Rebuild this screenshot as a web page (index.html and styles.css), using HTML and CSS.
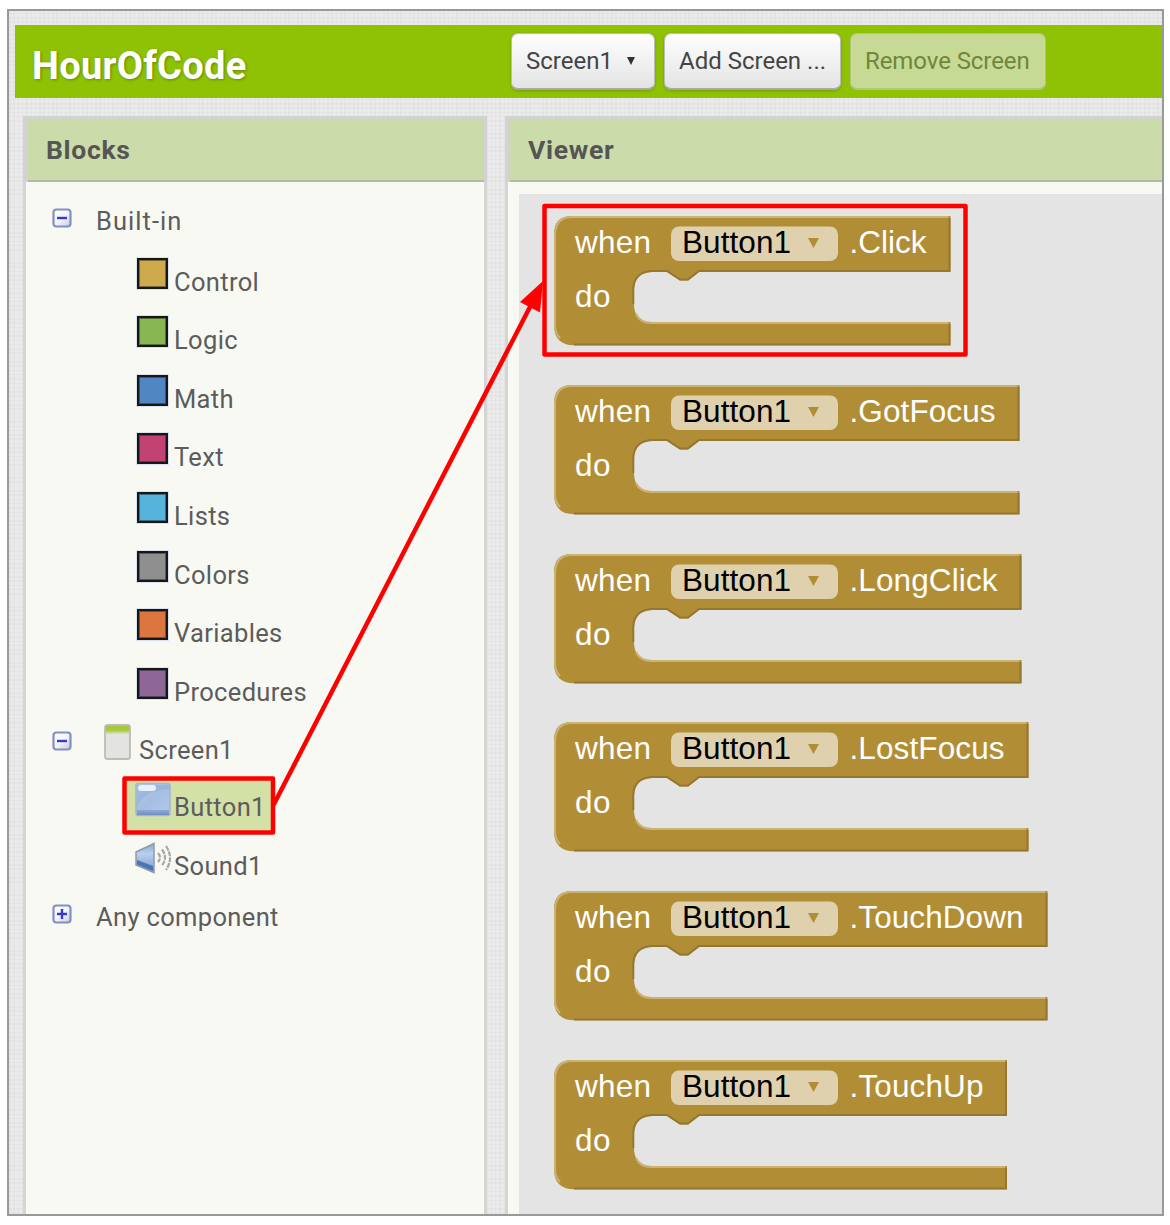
FILE: index.html
```html
<!DOCTYPE html>
<html lang="en">
<head>
<meta charset="utf-8">
<title>HourOfCode</title>
<link rel="stylesheet" href="styles.css">
</head>
<body>
<div class="window">
  <header class="bar">
    <h1 class="title">HourOfCode</h1>
    <nav class="tools">
      <button class="btn w-screen">Screen1<span class="caret"></span></button>
      <button class="btn w-add">Add Screen ...</button>
      <button class="btn w-remove disabled">Remove Screen</button>
    </nav>
  </header>
  <main class="panels">
    <section class="panel blocks">
      <h2 class="head">Blocks</h2>
      <div class="body tree">
        <div class="row root builtin"><svg class="toggle" viewBox="0 0 20 20"><use href="#box"/><path class="sign" d="M5 10H15"/></svg><span class="name">Built-in</span></div>
        <div class="row leaf"><i class="swatch control"></i><span class="name">Control</span></div>
        <div class="row leaf"><i class="swatch logic"></i><span class="name">Logic</span></div>
        <div class="row leaf"><i class="swatch math"></i><span class="name">Math</span></div>
        <div class="row leaf"><i class="swatch text"></i><span class="name">Text</span></div>
        <div class="row leaf"><i class="swatch lists"></i><span class="name">Lists</span></div>
        <div class="row leaf"><i class="swatch colors"></i><span class="name">Colors</span></div>
        <div class="row leaf"><i class="swatch variables"></i><span class="name">Variables</span></div>
        <div class="row leaf"><i class="swatch procedures"></i><span class="name">Procedures</span></div>
        <div class="row screen"><svg class="toggle" viewBox="0 0 20 20"><use href="#box"/><path class="sign" d="M5 10H15"/></svg><svg class="phone" viewBox="0 0 28 36"><rect x="1" y="1" width="25" height="34" rx="2.5" fill="url(#phone)" stroke="#bbb" stroke-width="1.8"/></svg><span class="name">Screen1</span></div>
        <div class="row leaf chosen"><svg class="comp" viewBox="0 0 36 36"><rect x="1" y="1.500" width="34" height="32" rx="2" fill="url(#glass)" stroke="#a9b4c6" stroke-width="1.500"/><path d="M2 26Q7 9 34 7V3H2Z" fill="#8fb0da" opacity=".6"/><rect x="3" y="3" width="18" height="6" rx="3" fill="#e9f0fa"/><path d="M2 28H34V33H2Z" fill="url(#shade)"/></svg><span class="name">Button1</span></div>
        <div class="row leaf sound"><svg class="comp" viewBox="0 0 36 36"><path d="M1 11 19 2.500V31.500L1 24Z" fill="url(#cone)" stroke="#8f9aac" stroke-width="1.500"/><path d="M2 19 18 25V30L2 23.500Z" fill="#4c74b5"/><path d="M23 12q4 4.500 0 9M27 8.500q6 8 0 16M31 5q8 12 0 24" fill="none" stroke="#a6a6a6" stroke-width="2.200" stroke-dasharray="5 1"/></svg><span class="name">Sound1</span></div>
        <div class="row root any"><svg class="toggle" viewBox="0 0 20 20"><use href="#box"/><path class="sign" d="M5 10H15M10 5V15"/></svg><span class="name">Any component</span></div>
      </div>
    </section>
    <section class="panel viewer">
      <h2 class="head">Viewer</h2>
      <div class="body">
        <div class="canvas">
          <svg class="block" viewBox="0 0 520 168.75"><path class="shape" d="M0 19Q0 1 18 1H396.500V57H145L134 65.500H126L113 57H98Q80 57 80 74V89Q80 107 98 107H396.500V130.300H20Q0 130 0 110Z"/><path class="dark" d="M395.500 3V56H145L134 64.500H126L113 56H98Q80 57 79.300 74V89M395.500 109V129.500H20"/><path class="light" d="M6 123Q1 118 1 110V19Q2 2 18 2H394.500M82 99Q86 108 98 108H394.500"/><use href="#labels"/><text x="295.500" y="38" textLength="77">.Click</text></svg>
          <svg class="block" viewBox="0 0 520 168.75"><path class="shape" d="M0 19Q0 1 18 1H465.500V57H145L134 65.500H126L113 57H98Q80 57 80 74V89Q80 107 98 107H465.500V130.300H20Q0 130 0 110Z"/><path class="dark" d="M464.500 3V56H145L134 64.500H126L113 56H98Q80 57 79.300 74V89M464.500 109V129.500H20"/><path class="light" d="M6 123Q1 118 1 110V19Q2 2 18 2H463.500M82 99Q86 108 98 108H463.500"/><use href="#labels"/><text x="295.500" y="38" textLength="146">.GotFocus</text></svg>
          <svg class="block" viewBox="0 0 520 168.75"><path class="shape" d="M0 19Q0 1 18 1H467.500V57H145L134 65.500H126L113 57H98Q80 57 80 74V89Q80 107 98 107H467.500V130.300H20Q0 130 0 110Z"/><path class="dark" d="M466.500 3V56H145L134 64.500H126L113 56H98Q80 57 79.300 74V89M466.500 109V129.500H20"/><path class="light" d="M6 123Q1 118 1 110V19Q2 2 18 2H465.500M82 99Q86 108 98 108H465.500"/><use href="#labels"/><text x="295.500" y="38" textLength="148">.LongClick</text></svg>
          <svg class="block" viewBox="0 0 520 168.75"><path class="shape" d="M0 19Q0 1 18 1H474.500V57H145L134 65.500H126L113 57H98Q80 57 80 74V89Q80 107 98 107H474.500V130.300H20Q0 130 0 110Z"/><path class="dark" d="M473.500 3V56H145L134 64.500H126L113 56H98Q80 57 79.300 74V89M473.500 109V129.500H20"/><path class="light" d="M6 123Q1 118 1 110V19Q2 2 18 2H472.500M82 99Q86 108 98 108H472.500"/><use href="#labels"/><text x="295.500" y="38" textLength="155">.LostFocus</text></svg>
          <svg class="block" viewBox="0 0 520 168.75"><path class="shape" d="M0 19Q0 1 18 1H493.500V57H145L134 65.500H126L113 57H98Q80 57 80 74V89Q80 107 98 107H493.500V130.300H20Q0 130 0 110Z"/><path class="dark" d="M492.500 3V56H145L134 64.500H126L113 56H98Q80 57 79.300 74V89M492.500 109V129.500H20"/><path class="light" d="M6 123Q1 118 1 110V19Q2 2 18 2H491.500M82 99Q86 108 98 108H491.500"/><use href="#labels"/><text x="295.500" y="38" textLength="174">.TouchDown</text></svg>
          <svg class="block" viewBox="0 0 520 168.75"><path class="shape" d="M0 19Q0 1 18 1H453V57H145L134 65.500H126L113 57H98Q80 57 80 74V89Q80 107 98 107H453V130.300H20Q0 130 0 110Z"/><path class="dark" d="M452 3V56H145L134 64.500H126L113 56H98Q80 57 79.300 74V89M452 109V129.500H20"/><path class="light" d="M6 123Q1 118 1 110V19Q2 2 18 2H451M82 99Q86 108 98 108H451"/><use href="#labels"/><text x="295.500" y="38" textLength="134">.TouchUp</text></svg>
        </div>
      </div>
    </section>
  </main>
</div>
<svg class="notes" viewBox="0 0 1170 1225">
  <rect x="124.500" y="778.500" width="148.500" height="54"/>
  <rect x="544.500" y="206" width="421" height="148.500"/>
  <path d="M273.500 805 532 303"/>
  <path class="tip" d="M543 281 520 302 540 312.500Z"/>
</svg>
<svg class="defs" width="0" height="0">
  <defs>
    <linearGradient id="boxfill" x2="1" y2="1"><stop stop-color="#fff"/><stop offset=".5" stop-color="#f4f4f8"/><stop offset="1" stop-color="#c9cbd6"/></linearGradient>
    <linearGradient id="phone" x2="0" y2="1"><stop stop-color="#a3c634"/><stop offset=".16" stop-color="#a9ca42"/><stop offset=".28" stop-color="#e3e4df"/><stop offset="1" stop-color="#e3e3e3"/></linearGradient>
    <linearGradient id="glass" x2="1" y2="1"><stop stop-color="#b4cbea"/><stop offset=".5" stop-color="#a5bee1"/><stop offset="1" stop-color="#b4caea"/></linearGradient>
    <linearGradient id="shade" x2="0" y2="1"><stop stop-color="#8faad6"/><stop offset="1" stop-color="#6d8ec4"/></linearGradient>
    <linearGradient id="cone" x2="0" y2="1"><stop stop-color="#86a7d5"/><stop offset=".35" stop-color="#b9d0ee"/><stop offset="1" stop-color="#7799cd"/></linearGradient>
    <g id="box"><rect x="1.500" y="1.500" width="17" height="17" rx="3" fill="url(#boxfill)" stroke="#8290c6" stroke-width="2.200"/></g>
    <g id="labels"><text x="21" y="38" textLength="76">when</text><text x="21" y="92" textLength="35.500">do</text><rect x="117" y="11.500" width="167" height="34.500" rx="8" fill="#dfd1ae"/><text class="field" x="128" y="38" textLength="109">Button1</text><path d="M254 23H265L259.500 33Z" fill="#b18e35"/></g>
  </defs>
</svg>
</body>
</html>
```
FILE: styles.css
```css
* { box-sizing: border-box; }
body { margin: 0; width: 1170px; height: 1225px; overflow: hidden; position: relative; background: #fff; font-family: Roboto, "Liberation Sans", sans-serif; }
.window {
  width: 1157px; height: 1207px; margin: 9px 0 0 7px; border: 2px solid #999; overflow: hidden;
  display: flex; flex-direction: column; padding: 14px 0 0 6px; gap: 18px;
  background:
    repeating-linear-gradient(90deg, rgba(0,0,0,.022) 0 1.5px, transparent 1.5px 4.3px),
    repeating-linear-gradient(0deg, rgba(0,0,0,.022) 0 1.5px, transparent 1.5px 4.3px),
    #ebebeb;
}
.bar { height: 73px; flex: none; background: #8fc204; display: flex; align-items: flex-start; }
.title { width: 496px; margin: 0; padding: 17px 0 0 17px; font-size: 38px; line-height: 48px; font-weight: 700; letter-spacing: .3px; color: #fff; text-shadow: 1px 1px 3px rgba(0,0,0,.3); }
.tools { display: flex; gap: 9px; padding-top: 8px; }
.btn { height: 57px; display: flex; align-items: center; padding: 0 0 0 14px; border: 1px solid #bdbdbd; border-bottom: 2px solid #a9a9a9; border-radius: 7px; background: linear-gradient(#fff, #e4e4e4); box-shadow: 0 1px 3px rgba(0,0,0,.2); font: 24px Roboto, sans-serif; color: #444; white-space: nowrap; }
.w-screen { width: 144px; }
.w-add { width: 177px; }
.w-remove { width: 196px; letter-spacing: -.08px; }
.disabled { background: #c7da95; border-color: #b0c67a; color: #6f863b; box-shadow: none; }
.caret { margin-left: 14px; border: 4px solid transparent; border-top: 8px solid #333; border-bottom: 0; }
.panels { flex: 1; min-height: 0; display: flex; gap: 18px; padding-left: 8px; }
.panel { border-top: 3px solid #d2d2d2; display: flex; flex-direction: column; }
.blocks { width: 464px; }
.viewer { flex: 1; }
.head { height: 63px; flex: none; margin: 0; padding: 0 0 0 18px; border: 0 solid #d2d2d2; border-left-width: 5px; font-size: 26.500px; line-height: 61px; font-weight: 700; letter-spacing: .7px; color: #555; background: #cbdba9; box-shadow: inset 0 -2px #b3baa3; }
.blocks .head { border-right-width: 3px; }
.body { flex: 1; min-height: 0; background: #f8f9f3; border-left: 3px solid #d5d5d5; }
.blocks .body { border-right: 3px solid #d5d5d5; }
.viewer .body { padding: 12px 0 0 11px; }
.tree { padding-top: 7px; font-size: 25.500px; color: #5c5c5c; }
.row { height: 58.600px; display: flex; white-space: nowrap; }
.name { line-height: 30px; letter-spacing: .35px; }
.root .name { padding-top: 17px; }
.builtin .name { letter-spacing: 1.050px; }
.root { padding-left: 26px; }
.root .toggle { margin: 19px 24px 0 0; }
.toggle { width: 20px; height: 20px; flex: none; }
.sign { stroke: #3838cd; stroke-width: 2.400; fill: none; }
.leaf { padding-left: 109px; }
.leaf .name, .screen .name { padding-top: 19px; }
.swatch { width: 31px; height: 31px; margin: 10px 6px 0 2px; border: 2px solid #151719; outline: 1px solid #dce2ed; box-shadow: inset 0 0 0 1px rgba(21,23,25,.45); }
.control { background: #cdab4c; } .logic { background: #88b653; }
.math { background: #5086c1; } .text { background: #c24372; }
.lists { background: #56b4dc; } .colors { background: #8f8f8f; }
.variables { background: #dd763e; } .procedures { background: #8e6797; }
.screen { padding-left: 26px; }
.screen .toggle { margin-top: 15px; }
.phone { width: 28px; height: 36px; margin: 8px 7px 0 32px; }
.comp { width: 36px; height: 36px; margin: 8px 3px 0 0; }
.chosen { height: 54px; margin: 3px 211px 1.600px 99px; padding-left: 10px; background: #d3e0a6; }
.chosen .comp { margin-top: 4px; }
.chosen .name { padding-top: 14px; }
.sound { height: 51.500px; }
.sound .comp { margin-top: 7px; }
.sound .name { padding-top: 17.500px; }
.canvas { height: 100%; padding: 21px 0 0 35px; background: #e4e4e4; display: flex; flex-direction: column; overflow: hidden; }
.block { width: 520px; height: 168.750px; flex: none; font: 31.500px "Liberation Sans", Arial, sans-serif; fill: #fff; overflow: visible; }
.shape { fill: #b18e35; }
.dark, .light { fill: none; stroke-width: 2; }
.dark { stroke: #947730; } .light { stroke: #cbb275; }
.field { fill: #000; }
.notes { position: absolute; left: 0; top: 0; width: 1170px; height: 1225px; fill: none; stroke: #f00; stroke-width: 4.500; stroke-linejoin: round; }
.notes .tip { fill: #f00; stroke: none; }
.defs { position: absolute; }
```
